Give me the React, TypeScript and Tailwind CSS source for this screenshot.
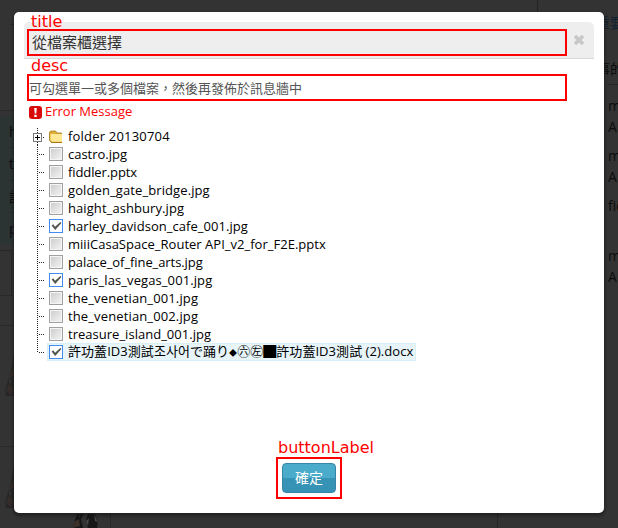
import type { ReactNode } from "react";

type Item = { name: string; tracking: string; checked?: boolean; selected?: boolean };

const files: Item[] = [
  { name: "castro.jpg", tracking: "tracking-[-0.02px]" },
  { name: "fiddler.pptx", tracking: "tracking-[-0.1px]" },
  { name: "golden_gate_bridge.jpg", tracking: "tracking-[0.1px]" },
  { name: "haight_ashbury.jpg", tracking: "tracking-[0.08px]" },
  { name: "harley_davidson_cafe_001.jpg", tracking: "tracking-[0.04px]", checked: true },
  { name: "miiiCasaSpace_Router API_v2_for_F2E.pptx", tracking: "tracking-[0.02px]" },
  { name: "palace_of_fine_arts.jpg", tracking: "tracking-[-0.08px]" },
  { name: "paris_las_vegas_001.jpg", tracking: "tracking-[0.1px]", checked: true },
  { name: "the_venetian_001.jpg", tracking: "tracking-[0.13px]" },
  { name: "the_venetian_002.jpg", tracking: "tracking-[0.13px]" },
  { name: "treasure_island_001.jpg", tracking: "tracking-[0.02px]" },
  { name: "許功蓋ID3測試조사어で踊り◆㊅㊧█許功蓋ID3測試 (2).docx", tracking: "tracking-[0.05px]", checked: true, selected: true },
];

function Checkbox({ checked }: { checked?: boolean }) {
  return (
    <svg className="block h-[14px] w-[14px] shrink-0" viewBox="0 0 14 14">
      <defs>
        <linearGradient id="box" x1="0" y1="0" x2="1" y2="1">
          <stop offset="0" stopColor="#cfcfcf" />
          <stop offset="1" stopColor="#f1f1f1" />
        </linearGradient>
      </defs>
      <rect x=".5" y=".5" width="13" height="13" fill={checked ? "#fff" : "#f4f4f4"} stroke={checked ? "#3f8cf4" : "#a0a0a0"} />
      {checked ? (
        <path d="M2.6 6.4 4.3 5.2 6 7.8 11.4 3 12.4 4 6.2 11Z" fill="#55564e" />
      ) : (
        <rect x="2" y="2" width="10" height="10" fill="url(#box)" />
      )}
    </svg>
  );
}

function Annotated({ label, labelClass, className, children }: { label: string; labelClass: string; className: string; children: ReactNode }) {
  return (
    <div className={`relative border-2 border-[#ff0000] ${className}`}>
      <span className={`absolute whitespace-nowrap font-['DejaVu_Sans',sans-serif] text-[16px] leading-[18px] font-normal text-[#ff0000] ${labelClass}`}>{label}</span>
      {children}
    </div>
  );
}

function Branch({ last }: { last?: boolean }) {
  return (
    <svg className="block h-[18px] w-[10px] shrink-0" viewBox="0 0 10 18" shapeRendering="crispEdges">
      <path d={last ? "M.5 0V10" : "M.5 0V18"} stroke="#222" strokeDasharray="1 1" />
      <path d="M2 9.5H7" stroke="#222" strokeDasharray="1 1" />
    </svg>
  );
}

function Figure({ className }: { className: string }) {
  return (
    <svg className={className} viewBox="0 0 28 44" preserveAspectRatio="none">
      <path d="M9 0 7 12 5 22 2 32 0 38 1 44H28V0Z" fill="#262626" />
      <path d="M5 20 8 17 8 24 4 27ZM2 35 5 32 8 38 6 43 3 41Z" fill="#342c28" />
      <path d="M4 27 6 28 5 33ZM1 36 2 38 1 41Z" fill="#3c3c3c" />
    </svg>
  );
}

function Backdrop() {
  return (
    <div className="flex h-full w-full justify-between text-[14px] text-[#0c0c0c]">
      <div className="flex w-[111px] flex-col">
        <div className="ml-[9px] mt-[24px] h-px shrink-0 bg-[#2b2b2b]" />
        <div className="mt-[85px] h-px shrink-0 bg-[#292929]" />
        <div className="mt-[5px] flex h-[129px] w-[50px] shrink-0 flex-col divide-y divide-[#252b2b] bg-[#2b3333] pl-[9px] leading-[32px]">
          <span className="h-8">h</span>
          <span className="h-[33px]">t</span>
          <span className="h-8">許</span>
          <span className="h-8">p</span>
        </div>
        <div className="mt-[5px] h-[46px] w-[12px] shrink-0 border-y border-r border-[#282828]" />
        <div className="mt-[29px] h-px shrink-0 bg-[#292929]" />
        <Figure className="ml-[5px] mt-[26px] h-[44px] w-[28px] shrink-0" />
        <div className="mt-[50px] h-px shrink-0 bg-[#292929]" />
        <Figure className="ml-[5px] mt-[17px] h-[44px] w-[28px] shrink-0" />
        <div className="flex h-[20px] shrink-0 justify-between border-r border-[#292929] pt-[6px]">
          <svg className="ml-[71px] h-[14px] w-[30px]" viewBox="0 0 30 14">
            <path d="M6 0H13L10 5 12 14H2L4 6ZM17 0H24L27 7 26 14H17L15 6Z" fill="#171717" />
            <path d="M3 8 8 5 9 12 2 14ZM7 1 9 2 9 4Z" fill="#3b302a" />
            <path d="M15 7 18 4 17 12ZM23 0 27 8 24 7Z" fill="#484848" />
          </svg>
        </div>
      </div>
      <div className="flex w-[121px]">
        <div className="h-[15px] w-[41px] self-end border-l border-[#272727]" />
        <div className="-ml-px h-[14px] w-px bg-[#242424]" />
        <div className="flex grow flex-col items-end leading-[21px]">
          <div className="mt-[12px] w-[22px] whitespace-nowrap text-[#102231]">重要</div>
          <div className="mt-[25px] w-[22px] whitespace-nowrap">事的</div>
          <div className="mt-[5px] h-px w-[11px] bg-[#272727]" />
          <div className="mt-[10px] w-[10px]">m<br />A</div>
          <div className="mt-[8px] w-[10px]">m<br />A</div>
          <div className="mt-[8px] w-[10px]">fid</div>
          <div className="mt-[29px] w-[10px]">m<br />A</div>
        </div>
      </div>
    </div>
  );
}

export default function App() {
  return (
    <div className="relative h-[528px] w-[618px] overflow-hidden bg-[#333333] font-['Open_Sans','Noto_Sans_CJK_TC',sans-serif]">
      <Backdrop />
      <section className="absolute left-[14px] top-[12px] flex h-[501px] w-[590px] flex-col rounded-[5px] bg-white px-[10px] pt-[10px] text-[13px] text-black shadow-[0_2px_3px_1px_rgba(20,20,20,0.55)]">
        <header className="flex h-[37px] shrink-0 items-start rounded-t-[5px] border-b border-[#d8dadd] bg-[#eeeeee] pl-[3px] pt-[7px]">
          <Annotated label="title" labelClass="left-[2px] top-[-18px]" className="h-[27px] w-[540px]">
            <h1 className="whitespace-nowrap pl-[3px] text-[15px] leading-[22px] text-[#333]">從檔案櫃選擇</h1>
          </Annotated>
          <svg className="ml-[6px] mt-[5px] h-[12px] w-[12px]" viewBox="0 0 12 12">
            <path d="M2 2 10 10M10 2 2 10" stroke="#c7c7c7" strokeWidth="3.6" />
          </svg>
        </header>
        <Annotated label="desc" labelClass="left-[2px] top-[-19px]" className="ml-[3px] mt-[15px] h-[27px] w-[540px] shrink-0">
          <p className="whitespace-nowrap leading-[25px] text-[#555]">可勾選單一或多個檔案，然後再發佈於訊息牆中</p>
        </Annotated>
        <div className="ml-[5px] mt-[2px] flex h-[18px] shrink-0 items-center text-[#ff0000]">
          <svg className="mr-[3px] h-[13px] w-[13px]" viewBox="0 0 13 13">
            <rect width="13" height="13" rx="3" fill="#d80b0b" />
            <path d="M5.2 2H7.8L7.3 7.5H5.7ZM5.3 8.7H7.7V10.9H5.3Z" fill="#fff" />
          </svg>
          <span className="whitespace-nowrap">Error Message</span>
        </div>
        <ul className="mt-[6px] flex shrink-0 flex-col pl-[13px] leading-[18px]">
          <li className="flex h-[18px]">
            <svg className="-ml-[4px] mr-[2px] block h-[18px] w-[29px] shrink-0" viewBox="0 0 29 18">
              <g shapeRendering="crispEdges">
                <path d="M4.5 1V18" stroke="#222" strokeDasharray="1 1" />
                <path d="M10 10.5H11" stroke="#222" />
                <rect x=".5" y="6.5" width="8" height="8" fill="#fff" stroke="#777" />
                <path d="M2 10.5H7M4.5 8V13" stroke="#000" />
              </g>
              <path d="M16.5 6Q16.5 4 18.5 4H22.5L24 6H28.5V15.5H18.5L16.5 13.5Z" fill="#dcae35" stroke="#a97718" strokeWidth=".8" />
              <path d="M17.5 7H29V14.7H19.5L17.5 13Z" fill="#ffe896" />
              <path d="M18 15.5H29" stroke="#a87617" />
            </svg>
            <span className="ml-[4px] whitespace-nowrap tracking-[0.2px]">folder 20130704</span>
          </li>
          {files.map((f) => (
            <li key={f.name} className="flex h-[18px]">
              <Branch last={f.selected} />
              <div className={`flex h-[18px] items-center pl-[2px] pr-[3px] ${f.selected ? "w-[369px] bg-[#e7f4f9] outline-1 -outline-offset-1 outline-[#d8f0fa]" : ""}`}>
                <Checkbox checked={f.checked} />
                <span className={`ml-[5px] whitespace-nowrap ${f.tracking}`}>
                  {f.selected ? (
                    <>許功蓋ID3測試조사어で踊り<span className="text-[8px]">◆</span>㊅㊧█許功蓋ID3測試 (2).docx</>
                  ) : (
                    f.name
                  )}
                </span>
              </div>
            </li>
          ))}
        </ul>
        <Annotated label="buttonLabel" labelClass="left-0 top-[-20px]" className="ml-[252px] mt-[96px] h-[42px] w-[66px] shrink-0 p-[4px]">
          <button className="block h-[30px] w-[54px] rounded-[4px] border border-[#3386a7] bg-linear-to-b from-[#4aabcb] from-50% to-[#3693b6] to-50% text-[14px] leading-[28px] text-white">確定</button>
        </Annotated>
      </section>
    </div>
  );
}
